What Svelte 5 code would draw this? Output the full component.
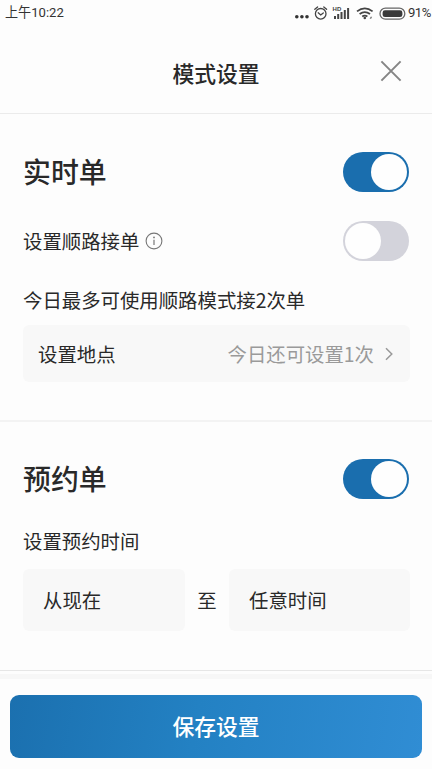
<script lang="ts">
  let realtime = $state(true);
  let onTheWay = $state(false);
  let booking = $state(true);
</script>

{#snippet toggle(on: boolean, label: string, flip: () => void)}
  <button
    type="button"
    class="switch"
    class:on
    role="switch"
    aria-checked={on}
    aria-label={label}
    onclick={flip}
  >
    <span class="knob"></span>
  </button>
{/snippet}

<div class="page">
  <div class="status">
    <span class="clock">上午10:22</span>
    <svg class="status-icons" width="112" height="24" viewBox="0 0 112 24">
      <g fill="#333">
        <circle cx="2.8" cy="15.7" r="1.8" />
        <circle cx="7.9" cy="15.7" r="1.8" />
        <circle cx="13" cy="15.7" r="1.8" />
      </g>
      <g fill="none" stroke="#444" stroke-width="1.3" stroke-linecap="round">
        <circle cx="26.7" cy="12.8" r="5.3" />
        <path d="M20.8 8.3l2.8-2.4M32.6 8.3l-2.8-2.4M24.2 11.8l2.5 2.1l2.6-2" />
      </g>
      <text x="38.6" y="9.6" class="hd">HD</text>
      <g fill="#444">
        <rect x="40" y="15" width="2" height="3" />
        <rect x="43.2" y="13" width="2" height="5" />
        <rect x="46.5" y="11" width="2" height="7" />
        <rect x="49.8" y="9" width="2" height="9" />
        <rect x="53.1" y="7" width="2" height="11" />
      </g>
      <g fill="none" stroke="#444" stroke-width="1.8">
        <path d="M63 10.4q7.8-6 15.6 0M65.6 13q5.2-3.8 10.4 0M68.2 15.5q2.6-1.8 5.2 0" />
      </g>
      <circle cx="70.8" cy="17" r="1.3" fill="#444" />
      <path d="M75.6 17.8l1-2h1.6l-1 2z" fill="#777" />
      <rect x="86" y="7.2" width="24.8" height="11" rx="5.5" fill="none" stroke="#666" stroke-width="1.3" />
      <rect x="88.6" y="9.3" width="19.8" height="6.8" rx="2.4" fill="#3a3a3a" />
    </svg>
    <span class="battery">91%</span>
  </div>

  <header>
    <h1>模式设置</h1>
    <button type="button" class="close" aria-label="关闭">
      <svg width="22" height="22" viewBox="0 0 22 22">
        <path d="M1.4 1.4L20.6 20.6M20.6 1.4L1.4 20.6" stroke="#858585" stroke-width="2" fill="none" />
      </svg>
    </button>
  </header>

  <section class="realtime">
    <div class="row">
      <h2>实时单</h2>
      {@render toggle(realtime, '实时单', () => (realtime = !realtime))}
    </div>
    <div class="row sub">
      <span class="label">
        设置顺路接单
        <svg width="18" height="18" viewBox="0 0 18 18">
          <circle cx="9" cy="9" r="7.9" fill="none" stroke="#777" stroke-width="1.1" />
          <path d="M9 7.7v5.4" stroke="#777" stroke-width="1.2" />
          <circle cx="9" cy="5.4" r=".9" fill="#777" />
        </svg>
      </span>
      {@render toggle(onTheWay, '设置顺路接单', () => (onTheWay = !onTheWay))}
    </div>
    <p>今日最多可使用顺路模式接2次单</p>
    <button type="button" class="place">
      <span>设置地点</span>
      <span class="remain">今日还可设置1次</span>
      <svg width="8" height="14" viewBox="0 0 8 14">
        <path d="M1 1.2L6.8 7L1 12.8" fill="none" stroke="#999" stroke-width="1.5" />
      </svg>
    </button>
  </section>

  <section class="booking">
    <div class="row">
      <h2>预约单</h2>
      {@render toggle(booking, '预约单', () => (booking = !booking))}
    </div>
    <p>设置预约时间</p>
    <div class="range">
      <button type="button" class="time">从现在</button>
      <span class="to">至</span>
      <button type="button" class="time">任意时间</button>
    </div>
  </section>

  <footer>
    <button type="button" class="save">保存设置</button>
  </footer>
</div>

<style>
  :global(body) {
    margin: 0;
    background: #fdfdfd;
  }

  .page {
    display: flex;
    flex-direction: column;
    width: 432px;
    height: 769px;
    overflow: hidden;
    box-sizing: border-box;
    background: #fdfdfd;
    color: #292929;
    font-family: 'Noto Sans CJK SC', 'Noto Sans', sans-serif;
    font-size: 19.4px;
    line-height: 28px;
  }

  h1,
  h2,
  p {
    margin: 0;
  }

  button {
    padding: 0;
    border: none;
    background: none;
    color: inherit;
    font: inherit;
    cursor: pointer;
  }

  svg {
    display: block;
    flex-shrink: 0;
  }

  .status {
    display: flex;
    align-items: center;
    height: 25px;
    padding: 0 0 0 5px;
    font-family: Roboto, 'Noto Sans CJK SC', sans-serif;
    font-size: 13.1px;
    line-height: 24px;
    color: #333;
  }

  .status-icons {
    margin-left: auto;
  }

  .hd {
    font: bold 6px 'Liberation Sans', sans-serif;
    fill: #444;
  }

  .battery {
    width: 24px;
    margin-left: 2px;
    letter-spacing: -0.5px;
  }

  header {
    display: grid;
    grid-template-columns: 1fr auto 1fr;
    align-items: center;
    height: 89px;
    padding: 0 30px;
    box-sizing: border-box;
    border-bottom: 1px solid #ebebeb;
  }

  h1 {
    grid-column: 2;
    margin-top: 8px;
    font-size: 21.8px;
    font-weight: 500;
    line-height: 32px;
  }

  .close {
    justify-self: end;
    margin-top: 4px;
  }

  section {
    display: flex;
    flex-direction: column;
    padding: 38px 22px 0 23px;
    box-sizing: border-box;
  }

  .realtime {
    height: 308px;
    border-bottom: 2px solid #f3f3f3;
  }

  .booking {
    padding-top: 37px;
    height: 249px;
    border-bottom: 1px solid #e6e6e6;
  }

  .row {
    display: flex;
    align-items: center;
    justify-content: space-between;
    height: 40px;
    padding-right: 1px;
  }

  .sub {
    margin-top: 29px;
  }

  h2 {
    margin-bottom: 2px;
    font-size: 27.9px;
    font-weight: 500;
    line-height: 40px;
  }

  .label {
    display: flex;
    align-items: center;
    gap: 6px;
  }

  .switch {
    display: flex;
    width: 66px;
    height: 40px;
    padding: 2px;
    border-radius: 20px;
    box-sizing: border-box;
    background: #d3d3db;
  }

  .switch.on {
    justify-content: flex-end;
    background: #1a6eae;
  }

  .knob {
    width: 36px;
    height: 36px;
    border-radius: 50%;
    background: #fefefe;
  }

  p {
    margin-top: 25px;
  }

  .place {
    display: flex;
    align-items: center;
    height: 57px;
    margin-top: 11px;
    padding: 0 17px 0 15px;
    border-radius: 6px;
    background: #f8f8f8;
  }

  .remain {
    margin-left: auto;
    margin-right: 11px;
    color: #9a9a9a;
  }

  .booking p {
    margin-top: 28px;
  }

  .range {
    display: grid;
    grid-template-columns: 162px 44px 1fr;
    margin-top: 14px;
  }

  .time {
    height: 62px;
    padding-left: 20px;
    border-radius: 6px;
    background: #f8f8f8;
    text-align: left;
  }

  .to {
    align-self: center;
    text-align: center;
  }

  footer {
    flex: 1;
    margin-top: 3px;
    padding: 16px 10px 0;
    border-top: 5px solid #f7f7f7;
  }

  .save {
    display: block;
    width: 100%;
    height: 63px;
    padding-bottom: 2px;
    border-radius: 9px;
    background: linear-gradient(100deg, #1b70af, #2381c3 45%, #308dd4);
    color: #fff;
    font-size: 21.8px;
    font-weight: 500;
  }
</style>
